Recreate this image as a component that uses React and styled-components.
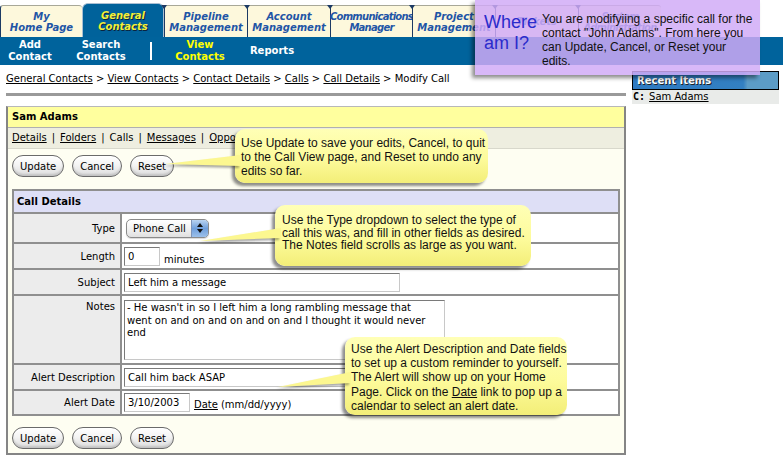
import React from "react";
import styled, { createGlobalStyle } from "styled-components";

const GlobalStyle = createGlobalStyle`
  html, body { margin: 0; padding: 0; background: #fff; }
  body { font-family: "DejaVu Sans", Verdana, sans-serif; font-size: 10px; color: #000; }
`;

const Page = styled.div`
  position: relative;
  width: 783px;
  height: 459px;
  overflow: hidden;
  background: #fff;
`;

/* ---------- top tabs ---------- */
const TabBar = styled.div`
  display: flex;
  align-items: flex-end;
  height: 37px;
  box-sizing: border-box;
`;

const Tab = styled.div`
  position: relative;
  flex: none;
  width: ${(p) => p.$w}px;
  height: ${(p) => (p.$active ? 34 : 32)}px;
  box-sizing: border-box;
  display: flex;
  align-items: center;
  justify-content: center;
  text-align: center;
  font-style: italic;
  font-weight: bold;
  font-size: 10px;
  line-height: 11px;
  letter-spacing: ${(p) => (p.$tight ? "-0.75px" : "0")};
  white-space: nowrap;
  color: ${(p) => (p.$active ? "#f2f03a" : "#1f55a6")};
  text-shadow: ${(p) => (p.$active ? "1px 1px 0 #0a2440" : "none")};
  background: ${(p) => (p.$active ? "#00629b" : "#fdf8dc")};
  border-top: 1px solid ${(p) => (p.$active ? "#a9bfd3" : "#a8a898")};
  border-left: 1px solid ${(p) => (p.$active ? "#a9bfd3" : "#1c3a64")};
  border-right: ${(p) => (p.$active ? "1px solid #a9bfd3" : "none")};
  border-radius: ${(p) => (p.$active ? "6px 6px 0 0" : "3px 3px 0 0")};
  &::before {
    content: "";
    display: ${(p) => (p.$notch ? "block" : "none")};
    position: absolute;
    left: -4px;
    top: -1px;
    border-left: 3px solid transparent;
    border-right: 3px solid transparent;
    border-top: 4px solid #1c3a64;
  }
`;

/* ---------- blue sub nav ---------- */
const SubNav = styled.div`
  display: flex;
  align-items: center;
  height: 28px;
  background: #00639c;
`;

const SubItem = styled.div`
  flex: none;
  width: ${(p) => p.$w}px;
  text-align: center;
  font-weight: bold;
  font-size: 10px;
  line-height: 12px;
  color: ${(p) => (p.$active ? "#ffff00" : "#ffffff")};
`;

const SubDivider = styled.div`
  flex: none;
  width: 2px;
  height: 18px;
  background: #fff;
  margin: 0 8px;
`;

/* ---------- content ---------- */
const Content = styled.div`
  display: flex;
  align-items: flex-start;
`;

const Main = styled.div`
  flex: none;
  width: 620px;
  margin-left: 6px;
`;

const Breadcrumb = styled.div`
  margin-top: 7px;
  height: 13px;
  line-height: 13px;
  font-size: 10px;
  white-space: nowrap;
`;

const Link = styled.a`
  color: #000;
  text-decoration: underline;
  cursor: pointer;
`;

const Rule = styled.div`
  height: 3px;
  margin-top: 8px;
  background: #9a9a9a;
`;

const Box = styled.div`
  margin-top: 10px;
  border: 2px solid #858585;
  border-top: 1px solid #b8b8b8;
  background: #fefef2;
`;

const BoxHeader = styled.div`
  height: 20px;
  line-height: 20px;
  padding-left: 4px;
  background: #ffff9e;
  font-weight: bold;
  border-bottom: 1px solid #b0b0b0;
`;

const SubLinks = styled.div`
  height: 20px;
  line-height: 20px;
  padding-left: 4px;
  background: #eeeee0;
  border-bottom: 1px solid #d8d8cc;
  white-space: nowrap;
`;

const Sep = styled.span`
  margin: 0 5px;
`;

const BoxBody = styled.div`
  padding: 6px 4px 4px 4px;
`;

const ButtonRow = styled.div`
  display: flex;
  gap: 8px;
  margin-top: ${(p) => p.$mt || 0}px;
`;

const Button = styled.button`
  height: 22px;
  padding: 0 7px;
  border: 1px solid #6a6a6a;
  border-radius: 11px;
  background: linear-gradient(180deg, #ffffff 0%, #f4f4f4 45%, #dcdcdc 100%);
  box-shadow: inset 0 -2px 2px rgba(0, 0, 0, 0.12), inset 0 1px 1px #fff;
  font-family: "DejaVu Sans", Verdana, sans-serif;
  font-size: 10px;
  color: #000;
  cursor: pointer;
`;

const Details = styled.div`
  margin-top: 12px;
  display: grid;
  grid-template-columns: 106px 1fr;
  grid-template-rows: 21px 28px 24px 24px 67px 24px 23px;
  gap: 2px;
  background: #8f8f8f;
  border: 2px solid #8f8f8f;
`;

const DetailsHead = styled.div`
  grid-column: 1 / -1;
  background: #dedff6;
  font-weight: bold;
  line-height: 21px;
  padding-left: 3px;
`;

const Label = styled.div`
  background: #ececec;
  display: flex;
  justify-content: flex-end;
  align-items: ${(p) => (p.$top ? "flex-start" : "center")};
  padding: ${(p) => (p.$top ? "5px 5px 0 0" : "0 5px 0 0")};
`;

const Value = styled.div`
  background: #fff;
  display: flex;
  align-items: ${(p) => (p.$top ? "flex-start" : "center")};
  padding: ${(p) => (p.$top ? "4px 0 0 2px" : "0 0 0 2px")};
  white-space: nowrap;
`;

const TextInput = styled.input`
  width: ${(p) => p.$w}px;
  height: 19px;
  box-sizing: border-box;
  border: 1px solid;
  border-color: #7a7a7a #c8c8c8 #c8c8c8 #7a7a7a;
  padding: 0 3px;
  font-family: "DejaVu Sans", Verdana, sans-serif;
  font-size: 10px;
  color: #000;
  background: #fff;
  outline: none;
`;

const Notes = styled.textarea`
  width: 321px;
  height: 60px;
  box-sizing: border-box;
  border: 1px solid;
  border-color: #7a7a7a #c8c8c8 #c8c8c8 #7a7a7a;
  padding: 1px 2px;
  font-family: "DejaVu Sans", Verdana, sans-serif;
  font-size: 10px;
  line-height: 12.7px;
  white-space: pre-wrap;
  resize: none;
  overflow: hidden;
  outline: none;
`;

const Select = styled.div`
  display: flex;
  width: 83px;
  height: 19px;
  margin-left: 2px;
  box-sizing: border-box;
  border: 1px solid #8a8a8a;
  border-radius: 5px;
  overflow: hidden;
  background: linear-gradient(180deg, #ffffff 0%, #f2f2f2 50%, #e0e0e0 100%);
  box-shadow: 0 1px 1px rgba(0, 0, 0, 0.15);
`;

const SelectText = styled.div`
  flex: 1;
  padding-left: 6px;
  line-height: 17px;
`;

const SelectArrows = styled.div`
  width: 16px;
  display: flex;
  align-items: center;
  justify-content: center;
  border-left: 1px solid #7d93b8;
  background: linear-gradient(180deg, #b9d3f1 0%, #6f9fdc 50%, #9cc0ea 100%);
`;

const Unit = styled.span`
  margin: 6px 0 0 4px;
`;

const DateLink = styled(Link)`
  margin-left: 4px;
  margin-top: 4px;
`;

const DateHint = styled.span`
  margin: 4px 0 0 3px;
`;

/* ---------- right column ---------- */
const Side = styled.div`
  flex: none;
  width: 147px;
  margin-left: 6px;
  margin-top: 6px;
`;

const RecentHead = styled.div`
  height: 19px;
  box-sizing: border-box;
  border: 1px solid #000;
  background: linear-gradient(90deg, #2e7ac2 0%, #3380c2 76%, #5c9cc6 79%, #5c9cc6 100%);
  color: #fff;
  font-weight: bold;
  font-size: 10px;
  line-height: 17px;
  padding-left: 4px;
  text-shadow: 1px 1px 0 #222;
`;

const RecentRow = styled.div`
  height: 14px;
  line-height: 14px;
  background: #e9ebe9;
  padding-left: 1px;
  white-space: nowrap;
`;

const Kind = styled.b`
  font-family: "DejaVu Sans Mono", monospace;
  margin-right: 4px;
`;

/* ---------- overlays ---------- */
const Overlay = styled.div`
  position: absolute;
  left: 475px;
  top: 0;
  width: 285px;
  height: 75px;
  display: flex;
  background: rgba(209, 170, 247, 0.84);
  box-shadow: -3px 3px 4px rgba(0, 0, 0, 0.45);
  font-family: "Liberation Sans", Arial, sans-serif;
  z-index: 5;
`;

const Where = styled.div`
  width: 67px;
  box-sizing: border-box;
  padding: 12px 0 0 9px;
  font-size: 18px;
  line-height: 21px;
  color: #2b2bcc;
`;

const OverlayText = styled.div`
  width: 218px;
  padding-top: 12px;
  font-size: 12px;
  line-height: 14px;
  color: #111;
`;

const Bubble = styled.div`
  position: absolute;
  z-index: 4;
  left: ${(p) => p.$x}px;
  top: ${(p) => p.$y}px;
  width: ${(p) => p.$w}px;
  height: ${(p) => p.$h}px;
  box-sizing: border-box;
  padding: ${(p) => p.$pt}px 0 0 ${(p) => p.$pl}px;
  border-radius: 10px;
  background: linear-gradient(180deg, #ffffb6 0%, #fdfb9c 55%, #f3ee78 100%);
  box-shadow: -3px 3px 3px rgba(0, 0, 0, 0.45);
  font-family: "Liberation Sans", Arial, sans-serif;
  font-size: 12px;
  line-height: ${(p) => p.$lh}px;
  color: #111;
  white-space: nowrap;
`;

const Tail = styled.svg`
  position: absolute;
  left: 0;
  top: 0;
  overflow: visible;
  z-index: -1;
  filter: drop-shadow(-2px 2px 1px rgba(0, 0, 0, 0.35));
`;

const Underline = styled.span`
  text-decoration: underline;
`;

function Callout({ x, y, w, h, pt, pl, lh, tail, children }) {
  return (
    <Bubble $x={x} $y={y} $w={w} $h={h} $pt={pt} $pl={pl} $lh={lh}>
      <Tail width="1" height="1">
        <polygon points={tail} fill="#fcf790" />
      </Tail>
      {children}
    </Bubble>
  );
}

const tabs = [
  { w: 82, l1: "My", l2: "Home Page" },
  { w: 82, l1: "General", l2: "Contacts", active: true },
  { w: 83, l1: "Pipeline", l2: "Management" },
  { w: 83, l1: "Account", l2: "Management" },
  { w: 82, l1: "Communications", l2: "Manager", tight: true },
  { w: 83, l1: "Project", l2: "Management" },
  { w: 83, l1: "Tickets", l2: "" },
  { w: 83, l1: "System", l2: "Administration", tight: true },
];

const notesText =
  "- He wasn't in so I left him a long rambling message that\nwent on and on and on and on and I thought it would never\nend";

export default function App() {
  return (
    <Page>
      <GlobalStyle />
      <TabBar>
        {tabs.map((t, i) => (
          <Tab
            key={i}
            $w={t.w}
            $active={t.active}
            $tight={t.tight}
            $notch={i > 0 && !t.active}
          >
            <div>
              {t.l1}
              {t.l2 && <br />}
              {t.l2}
            </div>
          </Tab>
        ))}
      </TabBar>
      <SubNav>
        <SubItem $w={60}>
          Add
          <br />
          Contact
        </SubItem>
        <SubItem $w={82}>
          Search
          <br />
          Contacts
        </SubItem>
        <SubDivider />
        <SubItem $w={80} $active>
          View
          <br />
          Contacts
        </SubItem>
        <SubItem $w={64}>Reports</SubItem>
      </SubNav>

      <Content>
        <Main>
          <Breadcrumb>
            <Link>General Contacts</Link> &gt; <Link>View Contacts</Link> &gt;{" "}
            <Link>Contact Details</Link> &gt; <Link>Calls</Link> &gt;{" "}
            <Link>Call Details</Link> &gt; Modify Call
          </Breadcrumb>
          <Rule />
          <Box>
            <BoxHeader>Sam Adams</BoxHeader>
            <SubLinks>
              <Link>Details</Link>
              <Sep>|</Sep>
              <Link>Folders</Link>
              <Sep>|</Sep>
              Calls
              <Sep>|</Sep>
              <Link>Messages</Link>
              <Sep>|</Sep>
              <Link>Opportunities</Link>
              <Sep>|</Sep>
              <Link>Alerts</Link>
            </SubLinks>
            <BoxBody>
              <ButtonRow>
                <Button>Update</Button>
                <Button>Cancel</Button>
                <Button>Reset</Button>
              </ButtonRow>
              <Details>
                <DetailsHead>Call Details</DetailsHead>
                <Label>Type</Label>
                <Value>
                  <Select>
                    <SelectText>Phone Call</SelectText>
                    <SelectArrows>
                      <svg width="6" height="10" viewBox="0 0 6 10">
                        <polygon points="3,0 6,4 0,4" fill="#111" />
                        <polygon points="0,6 6,6 3,10" fill="#111" />
                      </svg>
                    </SelectArrows>
                  </Select>
                </Value>
                <Label>Length</Label>
                <Value>
                  <TextInput $w={36} defaultValue="0" />
                  <Unit>minutes</Unit>
                </Value>
                <Label>Subject</Label>
                <Value>
                  <TextInput $w={276} defaultValue="Left him a message" />
                </Value>
                <Label $top>Notes</Label>
                <Value $top>
                  <Notes defaultValue={notesText} />
                </Value>
                <Label>Alert Description</Label>
                <Value>
                  <TextInput $w={276} defaultValue="Call him back ASAP" />
                </Value>
                <Label>Alert Date</Label>
                <Value>
                  <TextInput $w={66} defaultValue="3/10/2003" />
                  <DateLink>Date</DateLink>
                  <DateHint>(mm/dd/yyyy)</DateHint>
                </Value>
              </Details>
              <ButtonRow $mt={11}>
                <Button>Update</Button>
                <Button>Cancel</Button>
                <Button>Reset</Button>
              </ButtonRow>
            </BoxBody>
          </Box>
        </Main>
        <Side>
          <RecentHead>Recent Items</RecentHead>
          <RecentRow>
            <Kind>C:</Kind>
            <Link>Sam Adams</Link>
          </RecentRow>
        </Side>
      </Content>

      <Overlay>
        <Where>
          Where
          <br />
          am I?
        </Where>
        <OverlayText>
          You are modifyiing a specific call for the
          <br />
          contact "John Adams". From here you
          <br />
          can Update, Cancel, or Reset your
          <br />
          edits.
        </OverlayText>
      </Overlay>

      <Callout x={235} y={129} w={253} h={54} pt={7} pl={6} lh={14} tail="6,26 6,37 -70,35">
        Use Update to save your edits, Cancel, to quit
        <br />
        to the Call View page, and Reset to undo any
        <br />
        edits so far.
      </Callout>

      <Callout x={275} y={205} w={256} h={61} pt={9} pl={7} lh={12.5} tail="6,23 6,33 -75,36">
        Use the Type dropdown to select the type of
        <br />
        call this was, and fill in other fields as desired.
        <br />
        The Notes field scrolls as large as you want.
      </Callout>

      <Callout x={345} y={337} w={222} h={78} pt={5} pl={6} lh={14.2} tail="6,35 6,46 -67,50">
        Use the Alert Description and Date fields
        <br />
        to set up a custom reminder to yourself.
        <br />
        The Alert will show up on your Home
        <br />
        Page. Click on the <Underline>Date</Underline> link to pop up a
        <br />
        calendar to select an alert date.
      </Callout>
    </Page>
  );
}
